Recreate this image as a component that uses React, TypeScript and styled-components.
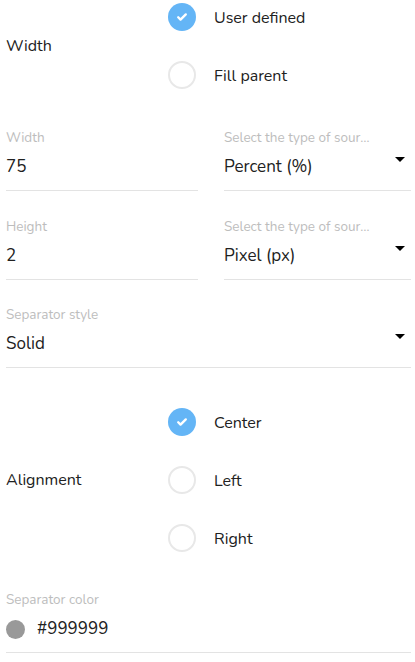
import React from 'react'
import styled, { createGlobalStyle } from 'styled-components'

const GlobalStyle = createGlobalStyle`
  body {
    margin: 0;
    background: #ffffff;
    font-family: 'Nunito', 'Open Sans', 'Noto Sans', sans-serif;
    color: #212121;
  }
`

const Page = styled.div`
  display: flex;
  flex-direction: column;
  padding: 3px 4px 0 6px;
`

const Section = styled.div<{ top?: number }>`
  margin-top: ${p => p.top || 0}px;
`

const GroupRow = styled.div`
  display: grid;
  grid-template-columns: 162px 1fr;
  align-items: center;
`

const GroupLabel = styled.div`
  font-size: 16px;
  line-height: 20px;
`

const Options = styled.div`
  display: flex;
  flex-direction: column;
  gap: 30px;
`

const Option = styled.label`
  display: flex;
  align-items: center;
  gap: 18px;
  height: 28px;
  font-size: 16px;
  line-height: 28px;
`

const OptionText = styled.span`
  padding-top: 1px;
`

const Circle = styled.span<{ checked?: boolean }>`
  box-sizing: border-box;
  flex: none;
  width: 28px;
  height: 28px;
  border-radius: 50%;
  display: inline-flex;
  align-items: center;
  justify-content: center;
  background: ${p => (p.checked ? '#64b5f6' : '#fff')};
  border: ${p => (p.checked ? 'none' : '2px solid #e8e8e8')};
`

const FieldRow = styled.div`
  display: grid;
  grid-template-columns: 192px 1fr;
  column-gap: 26px;
`

const Field = styled.div`
  display: flex;
  flex-direction: column;
  gap: 8px;
  padding-bottom: 11px;
  border-bottom: 1px solid #e3e3e3;
  min-width: 0;
`

const FieldLabel = styled.div`
  font-size: 13.5px;
  line-height: 18px;
  color: #bdbdbd;
  max-width: 146px;
  white-space: nowrap;
  overflow: hidden;
  text-overflow: ellipsis;
`

const ValueLine = styled.div`
  display: flex;
  align-items: center;
  gap: 12px;
  height: 24px;
  font-size: 17px;
  line-height: 24px;
`

const Value = styled.span`
  flex: 1;
`

const Arrow = styled.span`
  align-self: flex-start;
  margin-top: 2px;
  width: 0;
  height: 0;
  border-left: 5px solid transparent;
  border-right: 5px solid transparent;
  border-top: 5px solid #000;
  margin-right: 6px;
`

const Swatch = styled.span<{ color: string }>`
  flex: none;
  width: 19px;
  height: 19px;
  border-radius: 50%;
  background: ${p => p.color};
`

const Check = () => (
  <svg width="14" height="14" viewBox="0 0 24 24">
    <path
      d="M5.5 12.5l4 4L18.5 7.5"
      fill="none"
      stroke="#fff"
      strokeWidth="4"
      strokeLinecap="round"
      strokeLinejoin="round"
    />
  </svg>
)

type RadioGroupProps = {
  label: string
  options: string[]
  selected: number
}

const RadioGroup = ({ label, options, selected }: RadioGroupProps) => (
  <GroupRow>
    <GroupLabel>{label}</GroupLabel>
    <Options>
      {options.map((o, i) => (
        <Option key={o}>
          <Circle checked={i === selected}>{i === selected && <Check />}</Circle>
          <OptionText>{o}</OptionText>
        </Option>
      ))}
    </Options>
  </GroupRow>
)

const TextField = ({ label, value }: { label: string; value: string }) => (
  <Field>
    <FieldLabel>{label}</FieldLabel>
    <ValueLine>
      <Value>{value}</Value>
    </ValueLine>
  </Field>
)

const SelectField = ({ label, value }: { label: string; value: string }) => (
  <Field>
    <FieldLabel>{label}</FieldLabel>
    <ValueLine>
      <Value>{value}</Value>
      <Arrow />
    </ValueLine>
  </Field>
)

export default function App() {
  return (
    <>
      <GlobalStyle />
      <Page>
        <RadioGroup label="Width" options={['User defined', 'Fill parent']} selected={0} />
        <Section top={40}>
          <FieldRow>
            <TextField label="Width" value="75" />
            <SelectField label="Select the type of source" value="Percent (%)" />
          </FieldRow>
        </Section>
        <Section top={27}>
          <FieldRow>
            <TextField label="Height" value="2" />
            <SelectField label="Select the type of source" value="Pixel (px)" />
          </FieldRow>
        </Section>
        <Section top={26}>
          <SelectField label="Separator style" value="Solid" />
        </Section>
        <Section top={40}>
          <RadioGroup label="Alignment" options={['Center', 'Left', 'Right']} selected={0} />
        </Section>
        <Section top={39}>
          <Field>
            <FieldLabel>Separator color</FieldLabel>
            <ValueLine>
              <Swatch color="#999999" />
              <Value>#999999</Value>
            </ValueLine>
          </Field>
        </Section>
      </Page>
    </>
  )
}
